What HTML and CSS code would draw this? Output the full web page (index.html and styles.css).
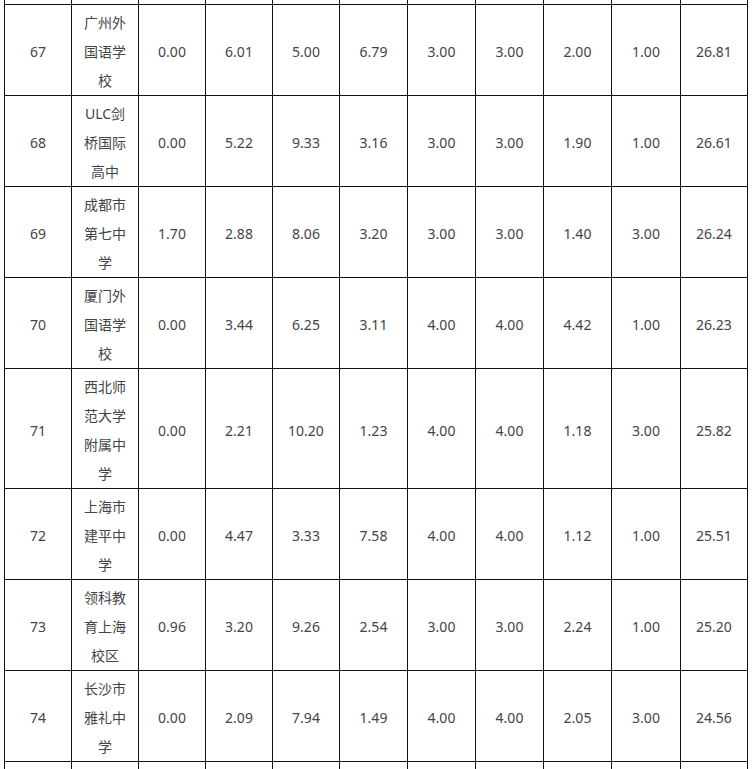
FILE: index.html
```html
<!DOCTYPE html>
<html lang="zh-CN">
<head>
<meta charset="utf-8">
<title>排名表</title>
<link rel="stylesheet" href="styles.css">
</head>
<body>
<div class="wrap">
<table class="rank">
<colgroup>
<col class="w67"><col class="w67"><col class="w67"><col class="w67"><col class="w67"><col class="w68"><col class="w68"><col class="w68"><col class="w68"><col class="w69"><col class="w67">
</colgroup>
<tbody>
<tr class="stub-top"><td></td><td></td><td></td><td></td><td></td><td></td><td></td><td></td><td></td><td></td><td></td></tr>
<tr><td>67</td><td class="name">广州外国语学校</td><td>0.00</td><td>6.01</td><td>5.00</td><td>6.79</td><td>3.00</td><td>3.00</td><td>2.00</td><td>1.00</td><td>26.81</td></tr>
<tr><td>68</td><td class="name">ULC剑桥国际高中</td><td>0.00</td><td>5.22</td><td>9.33</td><td>3.16</td><td>3.00</td><td>3.00</td><td>1.90</td><td>1.00</td><td>26.61</td></tr>
<tr><td>69</td><td class="name">成都市第七中学</td><td>1.70</td><td>2.88</td><td>8.06</td><td>3.20</td><td>3.00</td><td>3.00</td><td>1.40</td><td>3.00</td><td>26.24</td></tr>
<tr><td>70</td><td class="name">厦门外国语学校</td><td>0.00</td><td>3.44</td><td>6.25</td><td>3.11</td><td>4.00</td><td>4.00</td><td>4.42</td><td>1.00</td><td>26.23</td></tr>
<tr><td>71</td><td class="name">西北师范大学附属中学</td><td>0.00</td><td>2.21</td><td>10.20</td><td>1.23</td><td>4.00</td><td>4.00</td><td>1.18</td><td>3.00</td><td>25.82</td></tr>
<tr><td>72</td><td class="name">上海市建平中学</td><td>0.00</td><td>4.47</td><td>3.33</td><td>7.58</td><td>4.00</td><td>4.00</td><td>1.12</td><td>1.00</td><td>25.51</td></tr>
<tr><td>73</td><td class="name">领科教育上海校区</td><td>0.96</td><td>3.20</td><td>9.26</td><td>2.54</td><td>3.00</td><td>3.00</td><td>2.24</td><td>1.00</td><td>25.20</td></tr>
<tr><td>74</td><td class="name">长沙市雅礼中学</td><td>0.00</td><td>2.09</td><td>7.94</td><td>1.49</td><td>4.00</td><td>4.00</td><td>2.05</td><td>3.00</td><td>24.56</td></tr>
<tr class="stub-bottom"><td></td><td></td><td></td><td></td><td></td><td></td><td></td><td></td><td></td><td></td><td></td></tr>
</tbody>
</table>
</div>
</body>
</html>
```
FILE: styles.css
```css
html, body {
  margin: 0;
  padding: 0;
  background: #ffffff;
}
.wrap {
  height: 769px;
  overflow: hidden;
  padding-left: 4px;
}
.rank {
  width: 744px;
  table-layout: fixed;
  border-collapse: collapse;
  font-family: "Noto Sans", "Noto Sans CJK SC", sans-serif;
  font-size: 14px;
  color: #444444;
}
.w67 { width: 67px; }
.w68 { width: 68px; }
.w69 { width: 69px; }
.rank td {
  border: 1px solid #111111;
  text-align: center;
  vertical-align: middle;
  padding: 3px 8px 0;
  line-height: 29px;
  height: 87px;
  word-break: break-all;
}
.rank .stub-top td {
  height: 4px;
  line-height: 4px;
  padding: 0;
  border-top: none;
}
.rank .stub-bottom td {
  height: 20px;
  border-bottom: none;
}
```
